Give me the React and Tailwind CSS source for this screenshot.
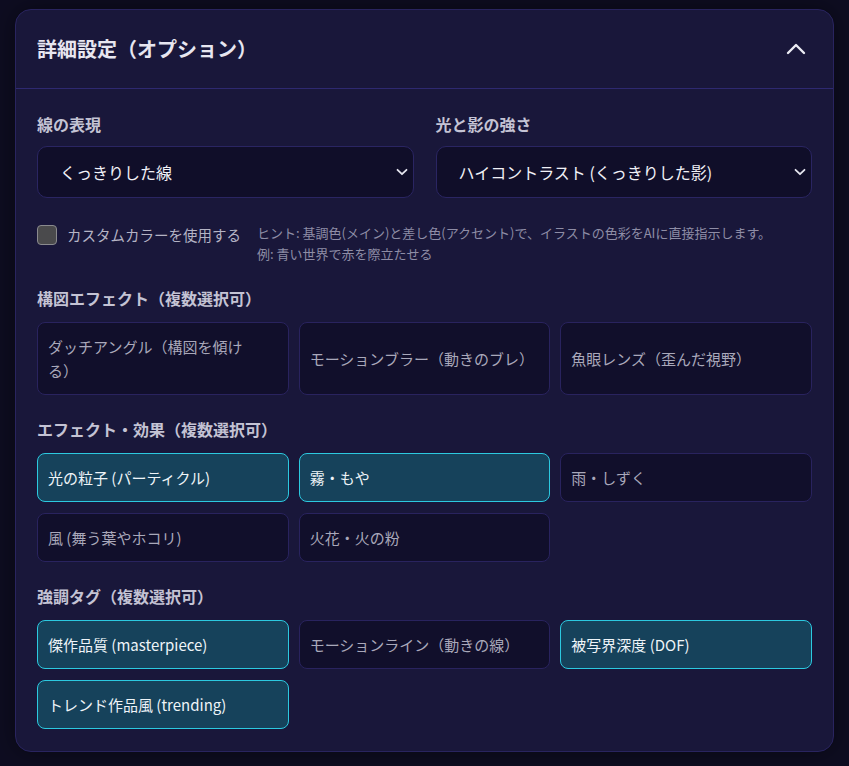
import { useState } from 'react';

const FONT = "font-['Noto_Sans_CJK_JP','Noto_Sans',sans-serif]";

// labels wrap where the original layout breaks them
const compositionOptions = [
  'ダッチアングル（構図を傾け\nる）',
  'モーションブラー（動きのブレ）',
  '魚眼レンズ（歪んだ視野）',
];

const effectOptions = [
  '光の粒子 (パーティクル)',
  '霧・もや',
  '雨・しずく',
  '風 (舞う葉やホコリ)',
  '火花・火の粉',
];

const emphasisOptions = [
  '傑作品質 (masterpiece)',
  'モーションライン（動きの線）',
  '被写界深度 (DOF)',
  'トレンド作品風 (trending)',
];

const ChevronDown = () => (
  <svg width="12" height="8" viewBox="0 0 12 8" fill="none" className="shrink-0">
    <path d="M1.5 1.8 6 6.2l4.5-4.4" stroke="#e4e4ee" strokeWidth="1.8" strokeLinecap="round" strokeLinejoin="round" />
  </svg>
);

const SelectField = ({ label, value }) => (
  <div>
    <div className="text-[16px] leading-[22px] font-semibold text-[#c4c3d4] mb-[11px]">{label}</div>
    <div className="h-[52px] flex items-center justify-between pl-[22px] pr-[5px] rounded-[10px] bg-[#100e29] border border-[#2a2562]">
      <span className="text-[16px] text-[#f1f1f7]">{value}</span>
      <ChevronDown />
    </div>
  </div>
);

const ChipGroup = ({ title, options, selected, onToggle }) => (
  <div>
    <div className="text-[16px] leading-[22px] font-semibold text-[#c4c3d4] mb-[13px]">{title}</div>
    <div className="grid grid-cols-3 gap-x-2.5 gap-y-[11px]">
      {options.map((opt) => {
        const on = selected.includes(opt);
        return (
          <button
            key={opt}
            onClick={() => onToggle(opt)}
            className={
              'text-left whitespace-pre-line pl-[10px] pr-[12px] py-[11.5px] rounded-[8px] border text-[15px] leading-6 flex items-center ' +
              (on
                ? 'bg-[#16425b] border-[#2cc9e0] text-[#eef4f8]'
                : 'bg-[#110f2b] border-[#29235e] text-[#a9a8ba]')
            }
          >
            {opt}
          </button>
        );
      })}
    </div>
  </div>
);

export default function App() {
  const [effects, setEffects] = useState(['光の粒子 (パーティクル)', '霧・もや']);
  const [composition, setComposition] = useState([]);
  const [emphasis, setEmphasis] = useState(['傑作品質 (masterpiece)', '被写界深度 (DOF)', 'トレンド作品風 (trending)']);

  const toggle = (setter) => (opt) =>
    setter((cur) => (cur.includes(opt) ? cur.filter((o) => o !== opt) : [...cur, opt]));

  return (
    <div className={`min-h-[766px] bg-[#0e0d21] pt-[9px] pl-[15px] ${FONT}`}>
      <div className="w-[819px] rounded-[16px] bg-[#19173a] border border-[#29245f] shadow-[0_0_24px_rgba(0,0,0,0.45)]">
        {/* header */}
        <div className="h-[79px] flex items-center justify-between pl-[21px] pr-[27px] border-b border-[#2e2970]">
          <h2 className="text-[20px] font-bold text-[#e7e6f0]">詳細設定（オプション）</h2>
          <svg width="20" height="12" viewBox="0 0 20 12" fill="none">
            <path d="M2 10 10 2l8 8" stroke="#ececf4" strokeWidth="2.4" strokeLinecap="round" strokeLinejoin="round" />
          </svg>
        </div>

        <div className="px-[21px] pt-[24px] pb-[22px] flex flex-col gap-[23px]">
          <div>
            <div className="grid grid-cols-2 gap-[22px]">
              <SelectField label="線の表現" value="くっきりした線" />
              <SelectField label="光と影の強さ" value="ハイコントラスト (くっきりした影)" />
            </div>

            {/* custom colour toggle + hint */}
            <div className="mt-[24px] flex items-start">
              <label className="flex items-center gap-[10px] h-[26px] mr-[16px]">
                <span className="w-[20px] h-[20px] rounded-[4px] bg-[#4a4a4c] border border-[#8a8a8e]" />
                <span className="text-[14.5px] text-[#b4b3c4]">カスタムカラーを使用する</span>
              </label>
              <p className="text-[13px] leading-[21px] text-[#8e8da6]">
                ヒント: 基調色(メイン)と差し色(アクセント)で、イラストの色彩をAIに直接指示します。
                <br />
                例: 青い世界で赤を際立たせる
              </p>
            </div>
          </div>

          <ChipGroup title="構図エフェクト（複数選択可）" options={compositionOptions} selected={composition} onToggle={toggle(setComposition)} />
          <ChipGroup title="エフェクト・効果（複数選択可）" options={effectOptions} selected={effects} onToggle={toggle(setEffects)} />
          <ChipGroup title="強調タグ（複数選択可）" options={emphasisOptions} selected={emphasis} onToggle={toggle(setEmphasis)} />
        </div>
      </div>
    </div>
  );
}
